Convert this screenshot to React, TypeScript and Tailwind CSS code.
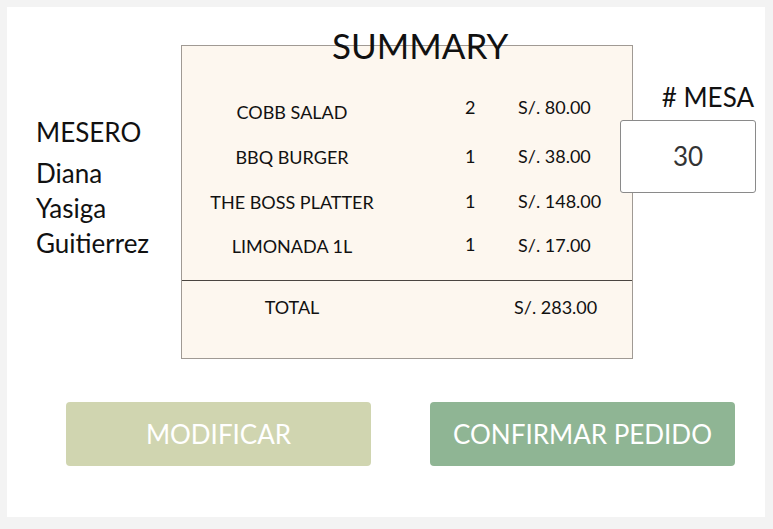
const items = [
  { name: 'COBB SALAD', qty: '2', price: 'S/. 80.00', rowCls: 'h-[49px]', nameCls: 'pt-[5px]', priceCls: '' },
  { name: 'BBQ BURGER', qty: '1', price: 'S/. 38.00', rowCls: 'h-[45px]', nameCls: 'pt-[1px]', priceCls: '' },
  { name: 'THE BOSS PLATTER', qty: '1', price: 'S/. 148.00', rowCls: 'h-[43px]', nameCls: 'pt-[1px]', priceCls: '' },
  { name: 'LIMONADA 1L', qty: '1', price: 'S/. 17.00', rowCls: 'h-[43px]', nameCls: 'pt-[2px]', priceCls: 'pt-[1px]' },
];

function OrderRow({ name, qty, price, rowCls, nameCls, priceCls }: (typeof items)[number]) {
  return (
    <div className={`flex items-start leading-[27px] ${rowCls}`}>
      <span className={`w-[220px] text-center ${nameCls}`}>{name}</span>
      <span className="ml-[63px] w-[53px]">{qty}</span>
      <span className={priceCls}>{price}</span>
    </div>
  );
}

export default function App() {
  return (
    <div className="h-[529px] w-[773px] bg-[#f3f3f3] pt-[7px] pl-[7px] font-['Lato',sans-serif] text-[#111]">
      <div className="h-[510px] w-[758px] bg-white">
        <div className="flex pt-[38px]">
          <div className="w-[174px] pl-[29px] pt-[70px] text-[26px] leading-[35px]">
            <p className="mb-[6px]">MESERO</p>
            <p>Diana</p>
            <p>Yasiga</p>
            <p>Guitierrez</p>
          </div>

          <div className="relative h-[314px] w-[452px] border border-[#a09a94] bg-[#fdf7ef] text-[18px]">
            <h1 className="absolute -top-[21px] left-[150px] text-[35px] leading-[40px]">SUMMARY</h1>
            <div className="h-[234px] pt-[48px]">
              {items.map((it) => (
                <OrderRow key={it.name} {...it} />
              ))}
            </div>
            <div className="border-t border-[#4a4540] pt-[13px] leading-[27px]">
              <div className="flex">
                <span className="w-[220px] text-center">TOTAL</span>
                <span className="pl-[112px]">S/. 283.00</span>
              </div>
            </div>
          </div>

          <div className="relative -ml-[13px] flex w-[136px] flex-col items-end">
            <p className="mr-[2px] mt-[37px] whitespace-nowrap text-[26px] leading-[30px]">#&nbsp;MESA</p>
            <div className="mt-[8px] flex h-[73px] w-[136px] items-center justify-center rounded-[3px] border border-[#8a8a8a] bg-white text-[26px] text-[#333]">
              30
            </div>
          </div>
        </div>

        <div className="mt-[43px] flex gap-[59px] pl-[59px]">
          <button className="h-[64px] w-[305px] rounded-[4px] bg-[#d0d5b0] text-[26px] text-white">MODIFICAR</button>
          <button className="h-[64px] w-[305px] rounded-[4px] bg-[#8fb594] text-[26px] text-white">CONFIRMAR PEDIDO</button>
        </div>
      </div>
    </div>
  );
}
